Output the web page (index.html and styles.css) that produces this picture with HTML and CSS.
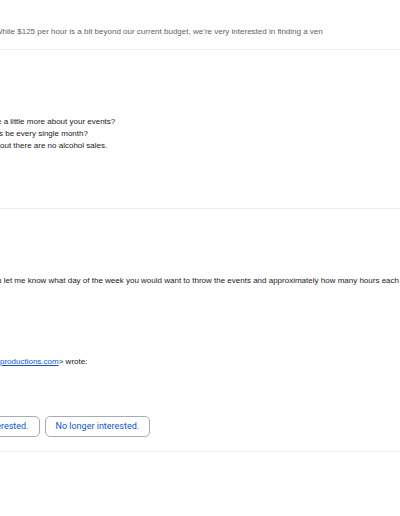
FILE: index.html
```html
<!DOCTYPE html>
<html lang="en">
<head>
<meta charset="utf-8">
<title>Thread</title>
<link rel="stylesheet" href="styles.css">
</head>
<body>
<div class="thread">
  <section class="msg msg-collapsed">
    <p class="snippet">While $125 per hour is a bit beyond our current budget, we’re very interested in finding a ven</p>
  </section>
  <section class="msg msg-short">
    <div class="body">
      <p class="ln ln-a">e a little more about your events?</p>
      <p class="ln ln-b">s be every single month?</p>
      <p class="ln ln-c">out there are no alcohol sales.</p>
    </div>
  </section>
  <section class="msg msg-open">
    <p class="ln ln-d">u let me know what day of the week you would want to throw the events and approximately how many hours each</p>
    <p class="ln quote-head"><a href="#" class="mail">productions.com</a>&gt; wrote:</p>
    <div class="replies">
      <button class="chip">Still interested.</button>
      <button class="chip">No longer interested.</button>
    </div>
  </section>
</div>
</body>
</html>
```
FILE: styles.css
```css
html, body {
  margin: 0;
  padding: 0;
  background: #ffffff;
}
body {
  width: 400px;
  height: 516px;
  overflow: hidden;
  font-family: "Liberation Sans", Arial, sans-serif;
  font-size: 8px;
  line-height: 12px;
  color: #222222;
}
.thread {
  display: flex;
  flex-direction: column;
}
.msg {
  border-bottom: 1px solid #eeeeee;
  white-space: nowrap;
  box-sizing: border-box;
}
p {
  margin: 0;
}
.msg-collapsed {
  height: 50px;
  padding-top: 26px;
}
.snippet {
  color: #5f6368;
  margin-left: -5px;
}
.msg-short {
  height: 159px;
  padding-top: 66px;
}
.ln-a { margin-left: -3px; }
.ln-b { margin-left: -1px; }
.ln-c { margin-left: 0; }
.msg-open {
  height: 243px;
  padding-top: 66px;
}
.ln-d { margin-left: -3px; }
.quote-head {
  margin-top: 69px;
  color: #222222;
}
.mail {
  color: #1155cc;
  text-decoration: underline;
}
.replies {
  display: flex;
  gap: 5px;
  margin-top: 48px;
  margin-left: -42px;
}
.chip {
  font-family: Roboto, "Liberation Sans", Arial, sans-serif;
  font-size: 9px;
  line-height: 19px;
  height: 21px;
  padding: 0 10px;
  border: 1px solid #a8abaf;
  border-radius: 5px;
  background: #ffffff;
  color: #0b57d0;
}
```
